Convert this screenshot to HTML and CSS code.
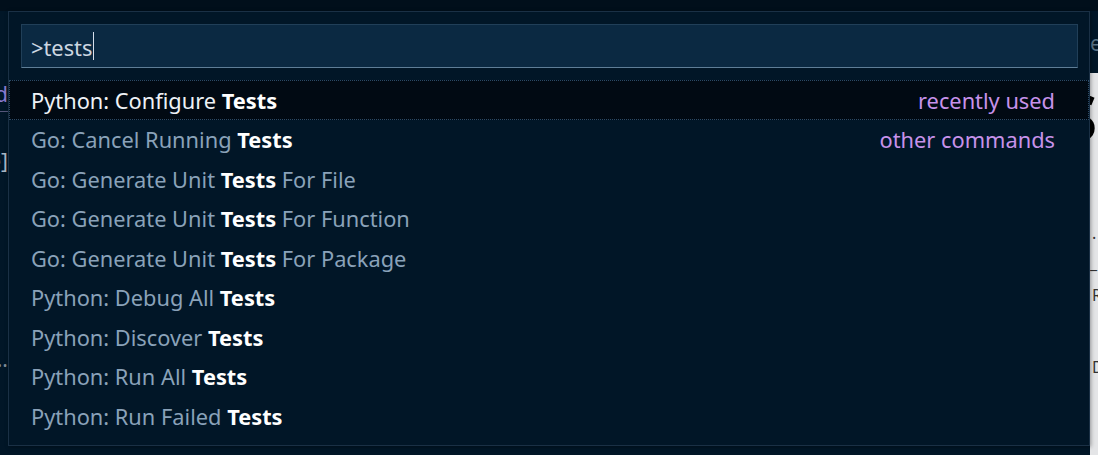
FILE: index.html
```html
<!DOCTYPE html>
<html>
<head>
<meta charset="utf-8">
<link rel="stylesheet" href="styles.css">
</head>
<body>
<div class="workbench">
  <div class="titlestrip"></div>
  <div class="leftpane">
    <span class="frag frag-d">d</span>
    <span class="frag frag-e">e]</span>
    <span class="frag frag-dots">...</span>
  </div>
  <div class="center"></div>
  <div class="rightpane">
    <div class="rp-top"><span class="frag-e2">e</span></div>
    <div class="rp-light">
      <span class="big">S</span>
      <span class="rl rl-dot">.</span>
      <span class="rl rl-dash">_</span>
      <span class="rl rl-r">R</span>
      <span class="rl rl-d">D</span>
    </div>
  </div>
</div>

<div class="palette">
  <div class="inputbox"><span class="prompt">&gt;tests</span><span class="caret"></span></div>
  <ul class="list">
    <li class="row selected"><span class="label">Python: Configure <b>Tests</b></span><span class="tag">recently used</span></li>
    <li class="row"><span class="label">Go: Cancel Running <b>Tests</b></span><span class="tag">other commands</span></li>
    <li class="row"><span class="label">Go: Generate Unit <b>Tests</b> For File</span></li>
    <li class="row"><span class="label">Go: Generate Unit <b>Tests</b> For Function</span></li>
    <li class="row"><span class="label">Go: Generate Unit <b>Tests</b> For Package</span></li>
    <li class="row"><span class="label">Python: Debug All <b>Tests</b></span></li>
    <li class="row"><span class="label">Python: Discover <b>Tests</b></span></li>
    <li class="row"><span class="label">Python: Run All <b>Tests</b></span></li>
    <li class="row"><span class="label">Python: Run Failed <b>Tests</b></span></li>
  </ul>
</div>
</body>
</html>
```
FILE: styles.css
```css
html, body {
  margin: 0;
  padding: 0;
}
body {
  width: 1098px;
  height: 455px;
  overflow: hidden;
  background: #011627;
  font-family: "Noto Sans", "Open Sans", sans-serif;
  position: relative;
}
.workbench {
  display: grid;
  grid-template-columns: 8px 1082px 8px;
  grid-template-rows: 11px 444px;
  width: 1098px;
  height: 455px;
}
.titlestrip {
  grid-column: 1 / 4;
  background: #010f1b;
}
.leftpane {
  position: relative;
  background: #011627;
  overflow: hidden;
}
.frag {
  position: absolute;
  right: 0;
  font-size: 21px;
  line-height: 21px;
}
.frag-d { top: 73px; color: #8a7bd0; border-bottom: 1px solid #56577a; padding-bottom: 6px; }
.frag-e { top: 140px; color: #a8b6c4; }
.frag-dots { top: 338px; color: #7f8c98; }
.center { background: #011627; }
.rightpane {
  display: grid;
  grid-template-rows: 62px 1fr;
  overflow: hidden;
  background: #e4e5e7;
}
.rp-top {
  background: #011627;
  position: relative;
}
.frag-e2 {
  position: absolute;
  left: 0;
  top: 22px;
  font-size: 21px;
  line-height: 21px;
  color: #5a7386;
}
.rp-light {
  background: #e4e5e7;
  display: flex;
  flex-direction: column;
  font-size: 16px;
  color: #333;
  line-height: 16px;
  padding-left: 2px;
}
.big {
  font-size: 64px;
  font-weight: 700;
  color: #000;
  margin-left: -30px;
  margin-top: 12px;
  line-height: 64px;
  height: 64px;
}
.rl-dot { margin-top: 76px; }
.rl-dash { margin-top: 14px; margin-left: -2px; }
.rl-r { margin-top: 16px; }
.rl-d { margin-top: 56px; }

.palette {
  position: absolute;
  left: 8px;
  top: 11px;
  width: 1080px;
  height: 433px;
  background: #011627;
  border: 1px solid #1a3045;
  box-shadow: 1px 1px 4px rgba(0, 0, 0, 0.35);
  display: flex;
  flex-direction: column;
}
.inputbox {
  margin: 12px 11px 0 12px;
  height: 42px;
  background: #0b2942;
  border: 1px solid #213f58;
  border-bottom-color: #5f7e97;
  display: flex;
  align-items: center;
  padding-left: 9px;
}
.prompt {
  font-size: 21.8px;
  color: #cdd7e1;
  position: relative;
  top: 1px;
}
.caret {
  width: 1px;
  height: 28px;
  background: #d6deeb;
  margin-left: 1px;
}
.list {
  list-style: none;
  margin: 12px 0 0;
  padding: 0;
}
.row {
  height: 39.5px;
  display: flex;
  align-items: center;
  justify-content: space-between;
  padding: 1px 34px 0 22px;
  box-sizing: border-box;
  font-size: 21.8px;
  color: #8aa2b9;
}
.row b { color: #ffffff; font-weight: 700; }
.row.selected {
  background: #010a13;
  outline: 1px dotted #2b4a66;
  outline-offset: -1px;
  color: #eef2f6;
}
.tag { color: #c792ea; }
```
